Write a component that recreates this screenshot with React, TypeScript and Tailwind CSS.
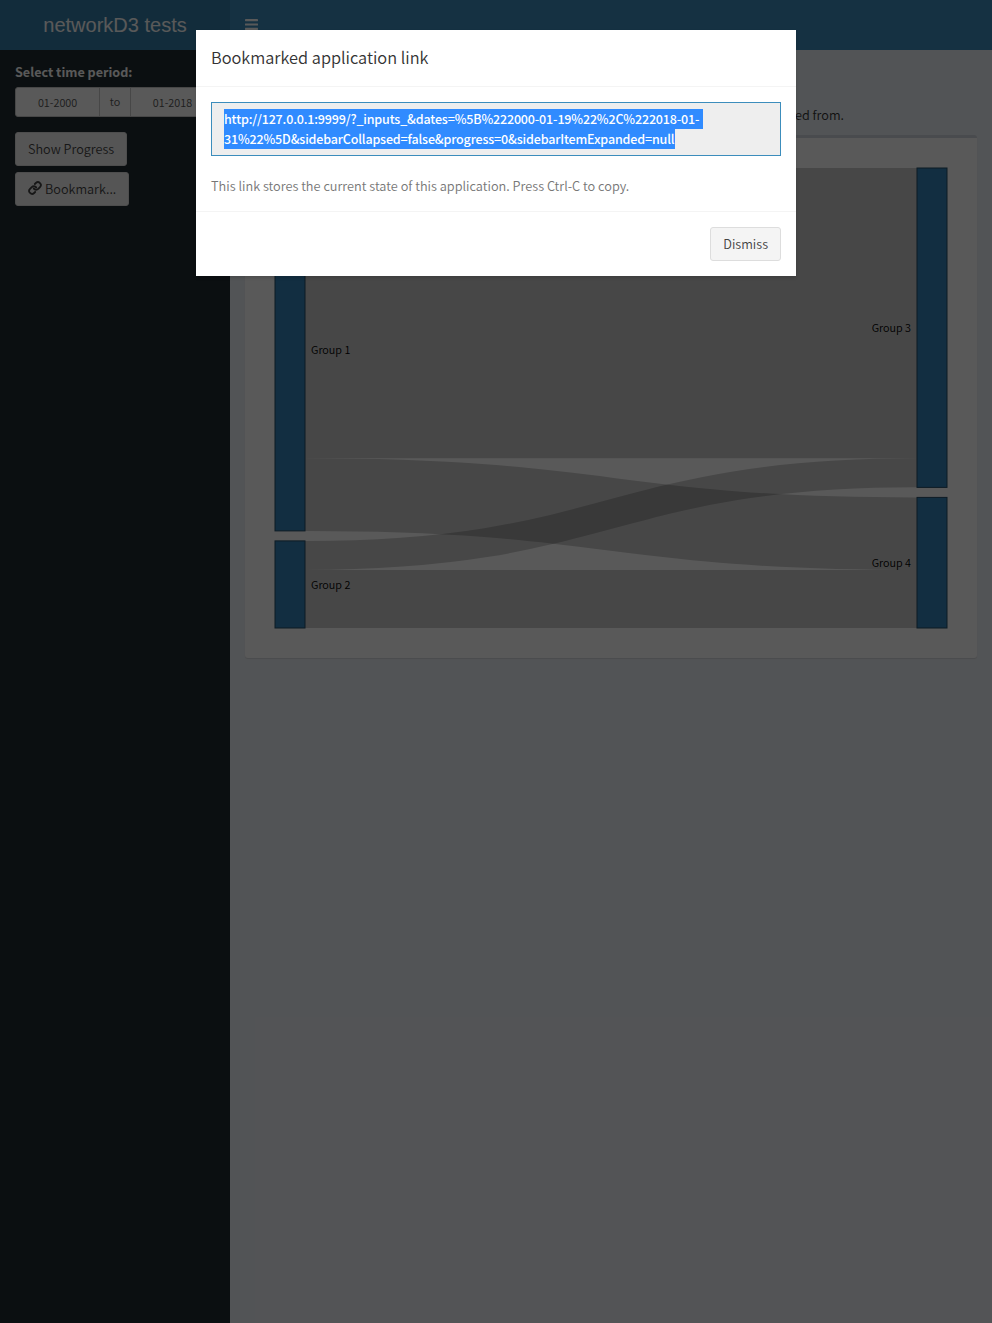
import React from "react";
import { Link } from "lucide-react";

const nodes = [
  { name: "Group 1", x: 0, y: 0, h: 362.9 },
  { name: "Group 2", x: 0, y: 372.9, h: 87.1 },
  { name: "Group 3", x: 642, y: 0, h: 319.4 },
  { name: "Group 4", x: 642, y: 329.4, h: 130.6 },
];

const links = [
  { from: 145.2, to: 145.2, width: 290.3 },
  { from: 326.6, to: 365.7, width: 72.6 },
  { from: 387.4, to: 304.8, width: 29 },
  { from: 431, to: 431, width: 58.1 },
];

function Sankey() {
  return (
    <svg width="672" height="460" viewBox="0 0 672 460" className="block overflow-visible">
      <g fill="none" stroke="#000" strokeOpacity="0.2">
        {links.map((l) => (
          <path key={l.from} d={`M30,${l.from}C336,${l.from} 336,${l.to} 642,${l.to}`} strokeWidth={l.width} />
        ))}
      </g>
      {nodes.map((n) => (
        <g key={n.name}>
          <rect x={n.x} y={n.y} width="30" height={n.h} fill="#1f77b4" stroke="#0f3a58" opacity="0.9" />
          <text
            x={n.x === 0 ? 36 : 636}
            y={n.y + n.h / 2 + 4.2}
            textAnchor={n.x === 0 ? "start" : "end"}
            className="text-[10.8px]"
            fill="#000"
          >
            {n.name}
          </text>
        </g>
      ))}
    </svg>
  );
}

const button = "flex items-center rounded-[3px] border border-[#ddd] bg-[#f4f4f4] px-3 h-[34px] text-[12.68px] text-[#444]";

export default function App() {
  return (
    <div className="relative flex h-[1323px] w-[992px] flex-col overflow-hidden bg-[#ecf0f5] font-['Noto_Sans_CJK_SC',sans-serif] text-[12.68px] font-[350] leading-5 text-[#333]">
      <header className="flex h-[50px] shrink-0 bg-[#3c8dbc] text-white">
        <div className="flex w-[230px] items-center justify-center bg-[#367fa9] font-['Liberation_Sans',sans-serif] text-[20px]">
          networkD3 tests
        </div>
        <div className="px-[15px] pt-[19px]">
          <svg width="13" height="11" viewBox="0 0 13 11" fill="#fff">
            <rect width="13" height="2.2" rx="0.4" />
            <rect y="4.4" width="13" height="2.2" rx="0.4" />
            <rect y="8.8" width="13" height="2.2" rx="0.4" />
          </svg>
        </div>
      </header>
      <div className="flex flex-1">
        <aside className="w-[230px] shrink-0 bg-[#222d32] px-[15px] pt-3">
          <div className="mb-[5px] text-[12.6px] font-bold text-white">Select time period:</div>
          <div className="flex h-[30px] w-[200px] overflow-hidden rounded-[3px] border border-[#ccc] bg-white text-center text-[10.8px] leading-7 text-[#555]">
            <div className="w-[84px]">01-2000</div>
            <div className="w-8 border-x border-[#ccc] leading-[26px]">to</div>
            <div className="w-[84px]">01-2018</div>
          </div>
          <div className="mt-[15px] flex flex-col items-start gap-1.5">
            <button className={button}>Show Progress</button>
            <button className={button}>
              <Link size={14} strokeWidth={3.2} className="-mt-0.5 mr-[3px]" />
              Bookmark...
            </button>
          </div>
        </aside>
        <main className="flex-1 px-[15px] pt-[55px]">
          <p className="pl-[550px]">ed from.</p>
          <section className="mt-[10px] h-[523px] rounded-[3px] border-t-[3px] border-[#d2d6de] bg-white px-[30px] pt-[30px] shadow-[0_1px_1px_rgba(0,0,0,0.1)]">
            <Sankey />
          </section>
        </main>
      </div>

      <div className="absolute inset-0 bg-black/65" />
      <div className="absolute left-[196px] top-[30px] w-[600px] bg-white shadow-[0_2px_3px_rgba(0,0,0,0.125)]">
        <div className="h-[57px] border-b border-[#f4f4f4] px-[15px] pt-[14px]">
          <h4 className="text-[16.35px] leading-[26px]">Bookmarked application link</h4>
        </div>
        <div className="h-[124px] p-[15px]">
          <div className="h-[54px] border border-[#3c8dbc] bg-[#eee] px-3 py-1.5 text-[12.53px] font-medium tracking-[-0.16px] text-white">
            <div className="flex h-5">
              <span className="w-[479px] whitespace-nowrap bg-[#308bff]">http://127.0.0.1:9999/?_inputs_&amp;dates=%5B%222000-01-19%22%2C%222018-01-</span>
            </div>
            <div className="flex h-5">
              <span className="w-[451px] whitespace-nowrap bg-[#308bff]">31%22%5D&amp;sidebarCollapsed=false&amp;progress=0&amp;sidebarItemExpanded=null</span>
            </div>
          </div>
          <p className="mt-5 text-[12.76px] text-[#777]">This link stores the current state of this application. Press Ctrl-C to copy.</p>
        </div>
        <div className="flex h-[65px] justify-end border-t border-[#f4f4f4] px-[15px] pt-[15px]">
          <button className={button}>Dismiss</button>
        </div>
      </div>
    </div>
  );
}
